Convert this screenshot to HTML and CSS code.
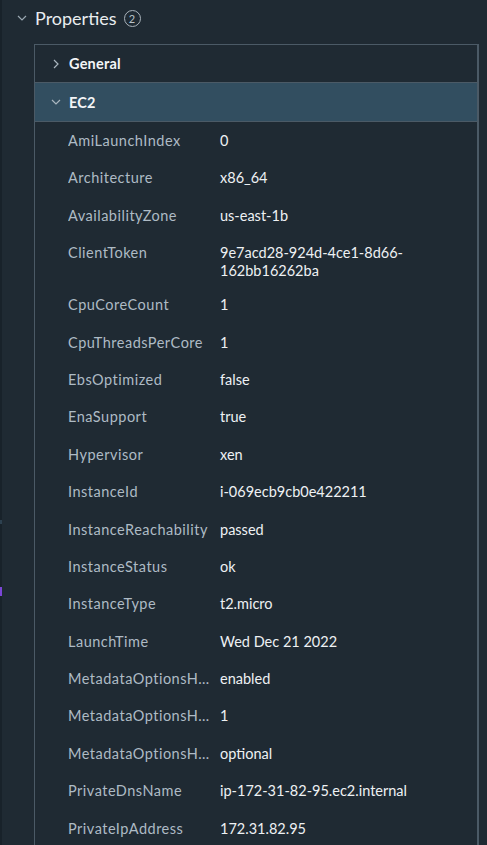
FILE: index.html
```html
<!DOCTYPE html>
<html>
<head>
<meta charset="utf-8">
<link rel="stylesheet" href="styles.css">
</head>
<body>
<div class="page">
  <div class="edge"><span class="mark mark-a"></span><span class="mark mark-b"></span></div>
  <div class="main">
    <div class="section-head">
      <svg class="chev" width="10" height="10" viewBox="0 0 10 10"><path d="M1 3 L5 7 L9 3" fill="none" stroke="#9aa8b2" stroke-width="1.2"/></svg>
      <span class="section-title">Properties</span>
      <span class="badge">2</span>
    </div>
    <div class="panel">
      <div class="group-head">
        <svg class="gchev" width="8" height="10" viewBox="0 0 8 10"><path d="M2 1 L6 5 L2 9" fill="none" stroke="#aab6bf" stroke-width="1.2"/></svg>
        <span class="group-title">General</span>
      </div>
      <div class="group-head open">
        <svg class="gchev" width="10" height="8" viewBox="0 0 10 8"><path d="M1 2 L5 6 L9 2" fill="none" stroke="#aab6bf" stroke-width="1.2"/></svg>
        <span class="group-title">EC2</span>
      </div>
      <div class="rows">
        <div class="row"><span class="k">AmiLaunchIndex</span><span class="v">0</span></div>
        <div class="row"><span class="k">Architecture</span><span class="v">x86_64</span></div>
        <div class="row"><span class="k">AvailabilityZone</span><span class="v">us-east-1b</span></div>
        <div class="row"><span class="k">ClientToken</span><span class="v">9e7acd28-924d-4ce1-8d66-<br>162bb16262ba</span></div>
        <div class="row"><span class="k">CpuCoreCount</span><span class="v">1</span></div>
        <div class="row"><span class="k">CpuThreadsPerCore</span><span class="v">1</span></div>
        <div class="row"><span class="k">EbsOptimized</span><span class="v">false</span></div>
        <div class="row"><span class="k">EnaSupport</span><span class="v">true</span></div>
        <div class="row"><span class="k">Hypervisor</span><span class="v">xen</span></div>
        <div class="row"><span class="k">InstanceId</span><span class="v">i-069ecb9cb0e422211</span></div>
        <div class="row"><span class="k">InstanceReachability</span><span class="v">passed</span></div>
        <div class="row"><span class="k">InstanceStatus</span><span class="v">ok</span></div>
        <div class="row"><span class="k">InstanceType</span><span class="v">t2.micro</span></div>
        <div class="row"><span class="k">LaunchTime</span><span class="v">Wed Dec 21 2022</span></div>
        <div class="row"><span class="k">MetadataOptionsHttpEndpoint</span><span class="v">enabled</span></div>
        <div class="row"><span class="k">MetadataOptionsHttpPutResponseHopLimit</span><span class="v">1</span></div>
        <div class="row"><span class="k">MetadataOptionsHttpTokens</span><span class="v">optional</span></div>
        <div class="row"><span class="k">PrivateDnsName</span><span class="v">ip-172-31-82-95.ec2.internal</span></div>
        <div class="row"><span class="k">PrivateIpAddress</span><span class="v">172.31.82.95</span></div>
      </div>
    </div>
  </div>
</div>
</body>
</html>
```
FILE: styles.css
```css
* { box-sizing: border-box; }
html, body { margin: 0; padding: 0; height: 100%; overflow: hidden; }
body {
  background: #1f2a33;
  font-family: Lato, "Noto Sans", sans-serif;
  color: #e8ecef;
}
.page { display: flex; height: 845px; }
.edge {
  width: 2px;
  background: #18222a;
  position: relative;
  flex: none;
}
.mark { position: absolute; left: 0; width: 2px; }
.mark-a { top: 587px; height: 9px; background: #7b46d6; }
.mark-b { top: 520px; height: 4px; background: #2d4150; }
.main { flex: 1; }
.section-head {
  display: flex;
  align-items: center;
  height: 36px;
  padding-left: 15px;
}
.chev { margin-right: 8px; }
.section-title { font-size: 18px; color: #e9edf0; }
.badge {
  margin-left: 7px;
  width: 17px;
  height: 17px;
  border: 1px solid #a9b3bb;
  border-radius: 50%;
  font-size: 11px;
  color: #b8c2c9;
  display: flex;
  align-items: center;
  justify-content: center;
}
.panel {
  margin: 8px 8px 0 32px;
  border: 1px solid #4b5a66;
  border-right-width: 2px;
  border-bottom: none;
}
.group-head {
  display: flex;
  align-items: center;
  height: 38px;
  padding-left: 16px;
  gap: 8px;
  border-bottom: 1px solid #4b5a66;
}
.group-head.open { background: #324e60; height: 39px; }
.group-title { font-weight: 700; font-size: 14.5px; letter-spacing: 0.2px; color: #f3f5f7; }
.gchev { width: 10px; }
.row {
  display: flex;
  gap: 6px;
  min-height: 37.4px;
  padding: 10px 8px 6px 33px;
  font-size: 14.5px;
  line-height: 18px;
}
.k {
  width: 146px;
  flex: none;
  color: #aebbc5;
  letter-spacing: 0.5px;
  white-space: nowrap;
  overflow: hidden;
  text-overflow: ellipsis;
}
.v { color: #eef1f3; }
```
